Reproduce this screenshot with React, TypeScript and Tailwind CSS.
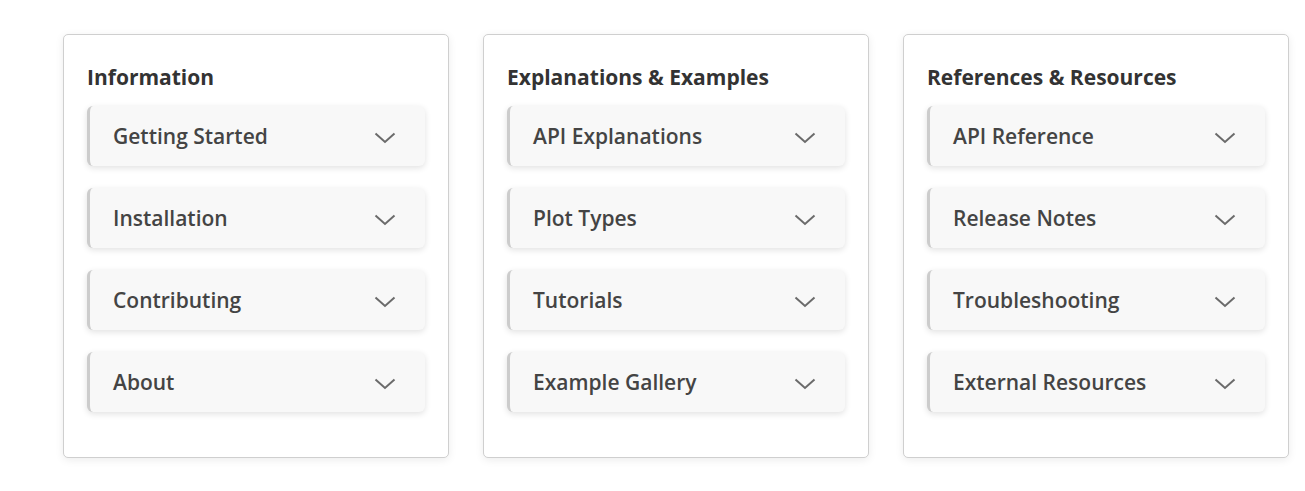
import React from "react";

const columns = [
  { title: "Information", items: ["Getting Started", "Installation", "Contributing", "About"] },
  { title: "Explanations & Examples", items: ["API Explanations", "Plot Types", "Tutorials", "Example Gallery"] },
  { title: "References & Resources", items: ["API Reference", "Release Notes", "Troubleshooting", "External Resources"] },
];

function Chevron() {
  return (
    <svg width="22" height="12" viewBox="0 0 22 12" fill="none" className="shrink-0">
      <path d="M1.5 1.5 L11 10 L20.5 1.5" stroke="#6b6b6b" strokeWidth="2" />
    </svg>
  );
}

export default function App() {
  return (
    <div
      className="w-[1305px] h-[491px] bg-white flex gap-[34px] pl-[63px] pt-[34px]"
      style={{ fontFamily: '"Open Sans", "Noto Sans", sans-serif' }}
    >
      {columns.map((col) => (
        <div
          key={col.title}
          className="w-[386px] h-[424px] border border-[#cfcfcf] rounded-[5px] bg-white shadow-[0_2px_8px_rgba(0,0,0,0.08)] px-[23px] pt-[28px]"
        >
          <h2 className="text-[21px] leading-[28px] font-bold text-[#333] mb-[15px]">{col.title}</h2>
          <div className="flex flex-col gap-[22px]">
            {col.items.map((it) => (
              <div
                key={it}
                className="h-[60px] flex items-center justify-between bg-[#f8f8f8] border-l-[3px] border-[#cccccc] rounded-[6px] shadow-[0_2px_6px_rgba(0,0,0,0.12)] pl-[23px] pr-[29px]"
              >
                <span className="text-[21px] font-semibold text-[#444] pt-[2px]">{it}</span>
                <span className="pt-[4px] pl-[1px]"><Chevron /></span>
              </div>
            ))}
          </div>
        </div>
      ))}
    </div>
  );
}
